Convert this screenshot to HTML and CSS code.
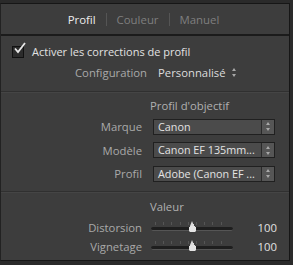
FILE: index.html
```html
<!DOCTYPE html>
<html lang="fr">
<head>
    <meta charset="UTF-8">
    <title>Corrections de l'objectif</title>
    <link rel="stylesheet" href="styles.css">
</head>
<body>
    <div class="panel">
        <div class="tabs">
            <span class="tab active">Profil</span>
            <span class="sep"></span>
            <span class="tab">Couleur</span>
            <span class="sep"></span>
            <span class="tab">Manuel</span>
        </div>

        <div class="section top">
            <label class="check">
                <span class="box">
                    <svg width="14" height="13" viewBox="0 0 14 13"><path d="M2 6.5 L5 10 L12 1" fill="none" stroke="#e8e8e8" stroke-width="1.8"/></svg>
                </span>
                Activer les corrections de profil
            </label>
            <div class="config">
                <span class="label">Configuration</span>
                <span class="value">Personnalisé</span>
                <span class="updown small"></span>
            </div>
        </div>

        <div class="section lens">
            <div class="title">Profil d'objectif</div>
            <div class="row">
                <span class="label">Marque</span>
                <div class="select"><span class="text">Canon</span><span class="arrow"><span class="updown"></span></span></div>
            </div>
            <div class="row">
                <span class="label">Modèle</span>
                <div class="select"><span class="text">Canon EF 135mm...</span><span class="arrow"><span class="updown"></span></span></div>
            </div>
            <div class="row">
                <span class="label">Profil</span>
                <div class="select"><span class="text">Adobe (Canon EF ...</span><span class="arrow"><span class="updown"></span></span></div>
            </div>
        </div>

        <div class="section last">
            <div class="title">Valeur</div>
            <div class="row slide">
                <span class="label">Distorsion</span>
                <div class="slider"><span class="ticks"></span><span class="track"></span><span class="thumb"></span></div>
                <span class="num">100</span>
            </div>
            <div class="row slide">
                <span class="label">Vignetage</span>
                <div class="slider"><span class="ticks"></span><span class="track"></span><span class="thumb"></span></div>
                <span class="num">100</span>
            </div>
        </div>
    </div>
</body>
</html>
```

FILE: styles.css
```css
body {
    margin: 0;
    padding: 3px 3px 3px 0;
    background: #2a2a2a;
    font-family: "Open Sans", "Liberation Sans", sans-serif;
    font-size: 11.3px;
    color: #a9a9a9;
}

.panel {
    height: 256px;
    background: #3d3d3d;
    border: 1px solid #161616;
    border-left: 1px solid #222;
}

.tabs {
    height: 30px;
    border-bottom: 2px solid #1b1b1b;
    display: flex;
    align-items: center;
    justify-content: center;
    gap: 10px;
    padding-right: 3px;
    font-size: 11.4px;
}

.tab {
    color: #7f7f7f;
}

.tab.active {
    color: #ececec;
}

.sep {
    width: 1px;
    height: 13px;
    background: #555;
}

.section {
    border-bottom: 1px solid #303030;
    box-shadow: 0 1px 0 #454545;
}

.section.last {
    border-bottom: none;
    box-shadow: none;
}

.section.top {
    height: 49px;
    padding-top: 6px;
}

.check {
    display: flex;
    align-items: center;
    gap: 8px;
    padding-left: 11px;
    height: 18px;
    color: #e2e2e2;
    font-size: 11px;
}

.box {
    position: relative;
    width: 10px;
    height: 10px;
    border: 1px solid #111;
    background: #2c2c2c;
    margin-top: 1px;
}

.box svg {
    position: absolute;
    left: 0;
    top: -5px;
}

.config {
    display: flex;
    align-items: center;
    height: 24px;
    padding-left: 74px;
}

.config .value {
    color: #dcdcdc;
    margin-left: 11px;
}

.updown {
    display: inline-block;
    width: 5px;
    height: 9px;
    position: relative;
}

.updown::before,
.updown::after {
    content: "";
    position: absolute;
    left: 0;
    border-left: 2.5px solid transparent;
    border-right: 2.5px solid transparent;
}

.updown::before {
    top: 0;
    border-bottom: 3px solid #a8a8a8;
}

.updown::after {
    bottom: 0;
    border-top: 3px solid #a8a8a8;
}

.updown.small {
    margin-left: 6px;
}

.title {
    padding-left: 149px;
    color: #b0b0b0;
    height: 18px;
    line-height: 18px;
}

.lens .title {
    padding-top: 5px;
}

.last .title {
    padding-top: 6px;
    padding-bottom: 1.5px;
}

.row {
    display: flex;
    align-items: center;
    height: 23.5px;
}

.label {
    text-align: right;
    color: #a9a9a9;
}

.row .label {
    width: 141px;
    margin-right: 11px;
}

.select {
    display: flex;
    width: 120px;
    height: 14px;
    border: 1px solid #202020;
    background: #4b4b4b;
    color: #e4e4e4;
    font-size: 10.8px;
}

.select .text {
    flex: 1;
    padding-left: 4px;
    line-height: 14px;
    white-space: nowrap;
    overflow: hidden;
}

.select .arrow {
    width: 12px;
    border-left: 1px solid #2a2a2a;
    background: #565656;
    display: flex;
    align-items: center;
    justify-content: center;
}

.lens .row:last-child {
    margin-bottom: 5.5px;
}

.slide {
    height: 19px;
}

.slide .label {
    margin-right: 9px;
}

.slider {
    position: relative;
    width: 82px;
    height: 14px;
}

.ticks {
    position: absolute;
    left: 4px;
    right: 4px;
    top: 2px;
    height: 3px;
    background: repeating-linear-gradient(90deg, #555 0 1px, transparent 1px 8.2px);
}

.track {
    position: absolute;
    left: 0;
    right: 0;
    top: 7px;
    height: 3px;
    border-radius: 2px;
    background: #1e1e1e;
    border-bottom: 1px solid #555;
}

.thumb {
    position: absolute;
    left: 37px;
    top: 1px;
    width: 9px;
    height: 11px;
    background: radial-gradient(circle at 50% 75%, #e4e4e4 0 3.5px, transparent 4px),
                linear-gradient(#dcdcdc, #dcdcdc) 50% 3px / 3px 5px no-repeat;
}

.thumb::before {
    content: "";
    position: absolute;
    left: 2px;
    top: 0;
    border-left: 2.5px solid transparent;
    border-right: 2.5px solid transparent;
    border-bottom: 5px solid #dcdcdc;
}

.num {
    width: 44px;
    text-align: right;
    color: #e0e0e0;
}
```
